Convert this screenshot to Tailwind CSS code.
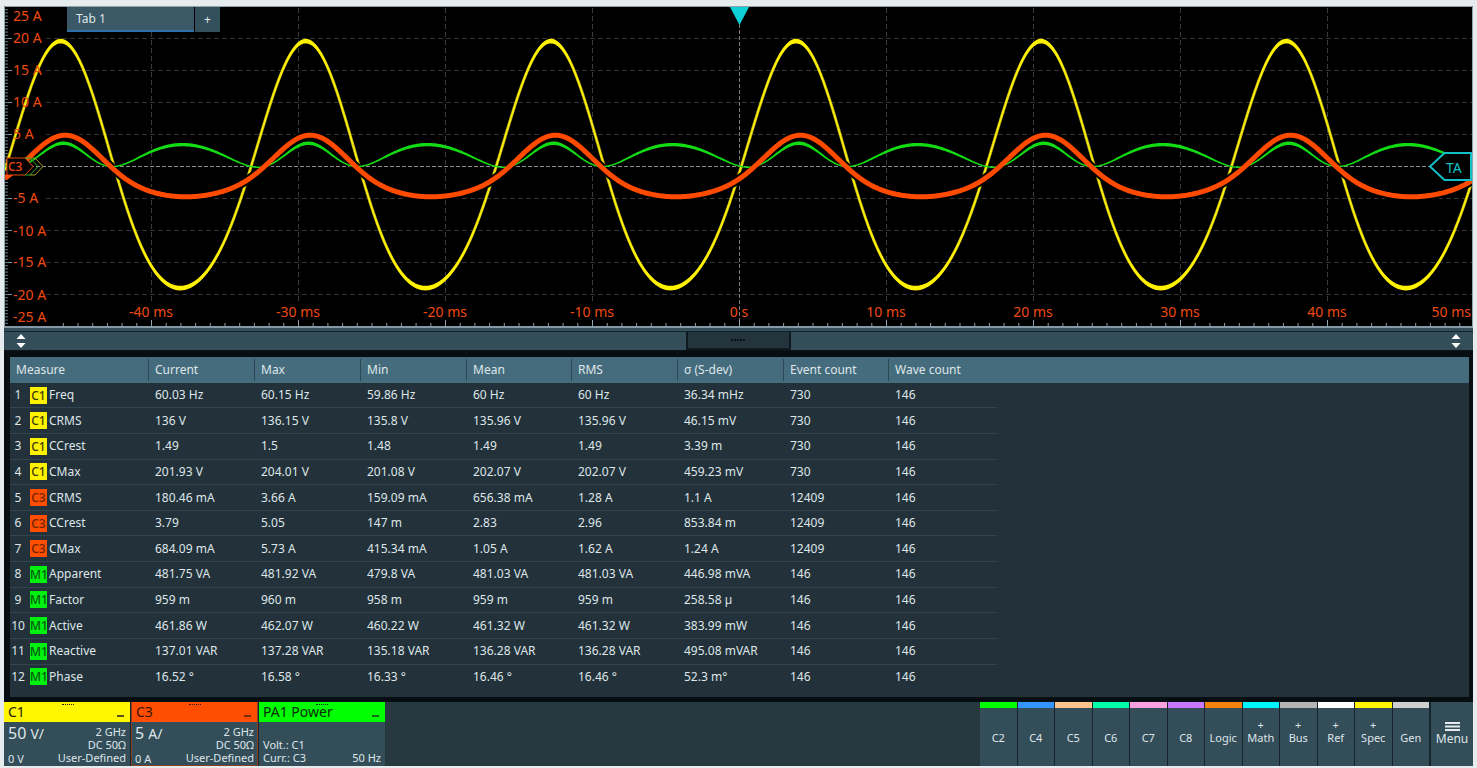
<!DOCTYPE html>
<html lang="en">
<head>
<meta charset="utf-8">
<meta name="viewport" content="width=device-width, initial-scale=1">
<title>Oscilloscope</title>
<script src="https://cdn.jsdelivr.net/npm/@tailwindcss/browser@4"></script>
</head>
<body class="bg-[#e6ebee] font-['Noto_Sans','Open_Sans',sans-serif] text-[#dfe6e9]">
<div class="flex min-h-screen flex-col px-1 pt-[6px] pb-[2px]">

  <!-- Waveform view -->
  <section class="relative bg-black" aria-label="Waveforms">
    <svg id="scope" viewBox="0 0 1469 320" class="block h-auto w-full font-['Noto_Sans','Open_Sans',sans-serif]" role="img" aria-label="Voltage, current and power over time">
      <rect width="1469" height="320" fill="#000"/>
      <g id="grid" fill="none"></g>
      <g id="traces" fill="none" stroke-linejoin="round"></g>
      <g id="labels" fill="#ee4a10" font-size="14"></g>
      <path d="M726 1h19l-9.500 18z" fill="#0cd0d4"/>
      <g stroke-width="1">
        <path d="M3 152h18l8 8.500-8 8.500H3z" fill="#000" stroke="#e8490c"/>
        <path d="M21 152h5l8 8.500-8 8.500h-5" fill="none" stroke="#1fae2a"/>
        <path d="M26 152h5l8 8.500-8 8.500h-5" fill="none" stroke="#a8a020"/>
        <text x="4" y="165" font-size="12" font-weight="500" fill="#ee4a10">C3</text>
      </g>
      <path d="M1426 160.500l14.500-13.500h26.500v27h-26.500z" fill="#000" stroke="#12bfc6" stroke-width="2"/>
      <text x="1442" y="167" font-size="14" fill="#14c0c8">TA</text>
      <path d="M0.500 320V0.500H1468.500V320" fill="none" stroke="#8fa3ad"/>
    </svg>
    <div class="absolute top-[1px] left-[63px] flex text-xs leading-none" role="tablist">
      <button role="tab" aria-selected="true" class="h-[25px] w-[127px] border-b-2 border-[#2d6fa8] bg-[#3a5866] pl-[9px] text-left">Tab 1</button>
      <button aria-label="Add tab" class="ml-px h-[25px] w-[25px] bg-[#344f5c]">+</button>
    </div>
  </section>

  <!-- Divider with drag handle -->
  <div class="flex h-[25px] items-stretch justify-between border-t-2 border-b border-t-[#8399a4] border-b-[#0b1318] bg-[#334d59] pt-[3px]">
    <div class="flex w-full items-stretch justify-between border-t border-[#14222a]">
      <button aria-label="Resize left" class="w-[34px] pl-3"><svg width="10" height="16" viewBox="0 0 10 16" fill="#fff"><path d="M5 1l4.500 5h-9zM5 15l4.500-5h-9z"/></svg></button>
      <button aria-label="Resize panels" class="flex w-[105px] items-center justify-center gap-px border-2 border-t-0 border-[#0f1a20] bg-[#24343d]"><svg width="16" height="2" viewBox="0 0 16 2" fill="#0a1216"><path d="M0 0h2v2h-2zM3 0h2v2h-2zM6 0h2v2h-2zM9 0h2v2h-2zM12 0h2v2h-2z"/></svg></button>
      <button aria-label="Resize right" class="w-[34px] pl-3"><svg width="10" height="16" viewBox="0 0 10 16" fill="#fff"><path d="M5 1l4.500 5h-9zM5 15l4.500-5h-9z"/></svg></button>
    </div>
  </div>

  <!-- Measurement results -->
  <main class="flex flex-1 flex-col bg-[#070e12] pt-[6px] pr-1 pb-[5px] pl-[6px]">
    <div class="flex-1 bg-[#22313a]">
      <table class="h-[332px] w-full table-fixed border-collapse text-xs leading-4">
        <colgroup>
          <col class="w-[138px]"><col class="w-[106px]"><col class="w-[106px]"><col class="w-[106px]"><col class="w-[105px]"><col class="w-[106px]"><col class="w-[106px]"><col class="w-[105px]"><col class="w-[109px]"><col>
        </colgroup>
        <thead><tr id="head" class="h-[26px] bg-[#456c7c]"></tr></thead>
        <tbody id="rows"></tbody>
      </table>
    </div>
  </main>

  <!-- Signal bar -->
  <footer class="flex h-16 justify-between bg-[#27383f]">
    <div class="flex">
      <section class="flex w-[127px] flex-col border-r border-[#17242b] bg-[#334d59]">
        <header class="relative flex h-5 items-center justify-between bg-[#fff600] px-1 text-sm leading-5 text-[#22220a]"><span>C1</span><span class="absolute top-[2px] left-[58px] w-3 border-t border-dotted border-[#22220a]"></span><button aria-label="Minimize C1" class="mt-2 mr-[2px] h-[2px] w-[7px] bg-[#55551a]"></button></header>
        <div class="flex flex-1 justify-between px-1 text-[11px] leading-[13px]">
          <div class="flex flex-col justify-between pb-px"><p class="pt-[2px] text-base leading-[18px]">50 <span class="text-sm leading-[18px]">V/</span></p><p>0 V</p></div>
          <div class="pt-[3px] text-right"><p>2 GHz</p><p>DC 50Ω</p><p>User-Defined</p></div>
        </div>
      </section>
      <section class="flex w-[127px] flex-col border border-t-0 border-[#8a3f22] bg-[#334d59]">
        <header class="relative flex h-5 items-center justify-between bg-[#ff4e00] px-1 text-sm leading-5 text-[#3a1405]"><span>C3</span><span class="absolute top-[2px] left-[57px] w-3 border-t border-dotted border-[#3a1405]"></span><button aria-label="Minimize C3" class="mt-2 mr-[2px] h-[2px] w-[7px] bg-[#7a2c0c]"></button></header>
        <div class="flex flex-1 justify-between px-[3px] text-[11px] leading-[13px]">
          <div class="flex flex-col justify-between"><p class="pt-[2px] text-base leading-[18px]">5 <span class="text-sm leading-[18px]">A/</span></p><p>0 A</p></div>
          <div class="pt-[3px] text-right"><p>2 GHz</p><p>DC 50Ω</p><p>User-Defined</p></div>
        </div>
      </section>
      <section class="flex w-[127px] flex-col border-l border-[#17242b] bg-[#334d59]">
        <header class="relative flex h-5 items-center justify-between bg-[#00ff00] px-1 text-sm leading-5 text-[#0b2c0b]"><span>PA1 Power</span><span class="absolute top-[2px] left-[57px] w-3 border-t border-dotted border-[#0b2c0b]"></span><button aria-label="Minimize PA1 Power" class="mt-2 mr-[2px] h-[2px] w-[7px] bg-[#176b17]"></button></header>
        <div class="flex flex-1 items-end justify-between px-1 pb-[2px] text-[11px] leading-[13px]">
          <div><p>Volt.: C1</p><p>Curr.: C3</p></div><p>50 Hz</p>
        </div>
      </section>
    </div>
    <nav class="flex" aria-label="Signals">
      <div id="signals" class="grid w-[450px] grid-cols-12 text-[11px] leading-[13px]"></div>
      <button class="flex w-[43px] flex-col items-center border-l border-[#17242b] bg-[#334d59] pt-5 text-xs leading-4"><svg width="15" height="9" viewBox="0 0 15 9" fill="#e6ecee"><path d="M0 0h15v2H0zM0 3.500h15v2H0zM0 7h15v2H0z"/></svg>Menu</button>
    </nav>
  </footer>
</div>

<script>
const heads = ['Measure','Current','Max','Min','Mean','RMS','σ (S-dev)','Event count','Wave count'];
document.getElementById('head').innerHTML = heads.map((h, i) =>
  `<th scope="col" class="p-0 text-left font-normal">${i ? '<div class="my-[2px] h-[22px] border-l border-[#2c4854] pl-[6px] leading-[22px]">' : '<div class="pl-[6px]">'}${h}</div></th>`).join('') + '<td></td>';

const rows = [
  ['C1','Freq','60.03 Hz','60.15 Hz','59.86 Hz','60 Hz','60 Hz','36.34 mHz','730'],
  ['C1','CRMS','136 V','136.15 V','135.8 V','135.96 V','135.96 V','46.15 mV','730'],
  ['C1','CCrest','1.49','1.5','1.48','1.49','1.49','3.39 m','730'],
  ['C1','CMax','201.93 V','204.01 V','201.08 V','202.07 V','202.07 V','459.23 mV','730'],
  ['C3','CRMS','180.46 mA','3.66 A','159.09 mA','656.38 mA','1.28 A','1.1 A','12409'],
  ['C3','CCrest','3.79','5.05','147 m','2.83','2.96','853.84 m','12409'],
  ['C3','CMax','684.09 mA','5.73 A','415.34 mA','1.05 A','1.62 A','1.24 A','12409'],
  ['M1','Apparent','481.75 VA','481.92 VA','479.8 VA','481.03 VA','481.03 VA','446.98 mVA','146'],
  ['M1','Factor','959 m','960 m','958 m','959 m','959 m','258.58 µ','146'],
  ['M1','Active','461.86 W','462.07 W','460.22 W','461.32 W','461.32 W','383.99 mW','146'],
  ['M1','Reactive','137.01 VAR','137.28 VAR','135.18 VAR','136.28 VAR','136.28 VAR','495.08 mVAR','146'],
  ['M1','Phase','16.52 °','16.58 °','16.33 °','16.46 °','16.46 °','52.3 m°','146'],
];
const badge = { C1: 'bg-[#fff200] text-[#3c3a08]', C3: 'bg-[#ff4e00] text-[#6e2406]', M1: 'bg-[#00f010] text-[#075a10]' };
document.getElementById('rows').innerHTML = rows.map((r, i) => {
  const last = i === rows.length - 1;
  const line = last ? '' : 'border-b border-[#33464f]';
  const cells = [...r.slice(2), '146'].map(v => `<td class="p-0 pl-[7px] ${line}">${v}</td>`).join('');
  return `<tr><th scope="row" class="p-0 text-left font-normal ${line}"><div class="flex items-center"><span class="w-4 text-center">${i + 1}</span><span class="mr-[2px] ml-1 h-[17px] w-[17px] overflow-hidden text-center font-medium leading-[17px] ${badge[r[0]]}">${r[0]}</span>${r[1]}</div></th>${cells}<td class="p-0"></td></tr>`;
}).join('');

const signals = [
  ['C2','bg-[#00ff00]'],['C4','bg-[#3595ff]'],['C5','bg-[#fac48c]'],['C6','bg-[#00ffa8]'],['C7','bg-[#fca0e0]'],['C8','bg-[#c878ff]'],
  ['Logic','bg-[#f5820f]'],['Math','bg-[#00f6ff]',1],['Bus','bg-[#b4b4b4]',1],['Ref','bg-[#ffffff]',1],['Spec','bg-[#fff600]',1],['Gen','bg-[#cfcfcf]'],
];
document.getElementById('signals').innerHTML = signals.map(([n, c, plus]) =>
  `<button class="flex flex-col items-center border-r border-[#17242b] bg-[#334d59]"><span class="h-[6px] w-full ${c}"></span><span class="mt-[10px] h-[13px]">${plus ? '+' : ''}</span><span>${n}</span></button>`).join('');

// Grid, ticks and axis labels
const X0 = 735, Y0 = 160, DX = 147, DY = 32;
let g = '';
for (let k = -4; k <= 4; k++) {
  if (k) g += `<path d="M${X0 + k * DX + .5} 2V298" stroke="#3b3b3b" stroke-dasharray="5 3"/>`;
  g += `<path d="M${X0 + k * DX + .5} 314V320" stroke="#8fa3ad"/>`;
  g += `<path d="M${k ? 42 : 2} ${Y0 + k * DY + .5}H1468" stroke="${k ? '#343434' : '#8d8d8d'}" stroke-dasharray="${k ? '5 3' : '4 2'}"/>`;
  g += `<path d="M1 ${Y0 + k * DY + .5}H8" stroke="#7d929c"/>`;
}
g += `<path d="M${X0 + .5} 18V314" stroke="#777" stroke-dasharray="4 2"/>`;
for (let i = -46; i < 50; i++) g += `<path d="M${X0 + i * 14.7 + .5} 317V320" stroke="#8fa3ad"/>`;
for (let i = -49; i < 50; i++) g += `<path d="M1 ${Y0 + i * 3.2 + .5}H4" stroke="#6c818b"/>`;
document.getElementById('grid').innerHTML = g;

let t = '';
[['25 A',10],['20 A',32],['15 A',64],['10 A',96],['5 A',128],['-5 A',192],['-10 A',225],['-15 A',256],['-20 A',289],['-25 A',311]]
  .forEach(([s, y]) => t += `<text x="9" y="${y + 5}">${s}</text>`);
for (let k = -4; k <= 4; k++) t += `<text x="${X0 + k * DX}" y="311" text-anchor="middle">${k ? k * 10 + ' ms' : '0 s'}</text>`;
t += `<text x="1467" y="311" text-anchor="end">50 ms</text>`;
document.getElementById('labels').innerHTML = t;

// Traces: a few harmonics each; power is the product of voltage and current
const wave = (a0, a1, a2, a3, skew, xp) => x => {
  const q = 2 * Math.PI * (x - xp) / 245.1;
  return a0 + a1 * Math.cos(q) + a2 * Math.cos(2 * q) + a3 * Math.cos(3 * q) + skew * (Math.sin(2 * q) - 2 * Math.sin(q));
};
const volt = wave(-10.8, 123.4, 12.8, 0, 1.4, 792), curr = wave(-6.1, 29.8, 6.6, 1, .15, 796.5);
const power = x => volt(x) * curr(x) / 168;
const line = f => { let d = ''; for (let x = 1; x <= 1468; x++) d += (d ? 'L' : 'M') + x + ' ' + (Y0 + .5 - f(x)).toFixed(2); return d; };
const band = (f, w) => { let a = '', b = ''; for (let x = 1; x <= 1468; x++) { a += (a ? 'L' : 'M') + x + ' ' + (Y0 + .5 - f(x) - w(x)).toFixed(2); b = 'L' + x + ' ' + (Y0 + .5 - f(x) + w(x)).toFixed(2) + b; } return a + b + 'Z'; };
document.getElementById('traces').innerHTML =
  `<path d="${line(volt)}" stroke="#b3a818" stroke-width="3"/>` +
  `<path d="${line(volt)}" stroke="#fff45a" stroke-width="1.200" stroke-dasharray="3 1.500"/>` +
  `<path d="${band(volt, () => 2.3)}" fill="#fff200"/>` +
  `<path d="${line(curr)}" stroke="#000" stroke-width="9"/>` +
  `<path d="${band(power, x => .7 + Math.max(0, power(x)) * .045)}" fill="#14dc14"/>` +
  `<path d="${line(curr)}" stroke="#ff4a00" stroke-width="5"/>`;
</script>
</body>
</html>
